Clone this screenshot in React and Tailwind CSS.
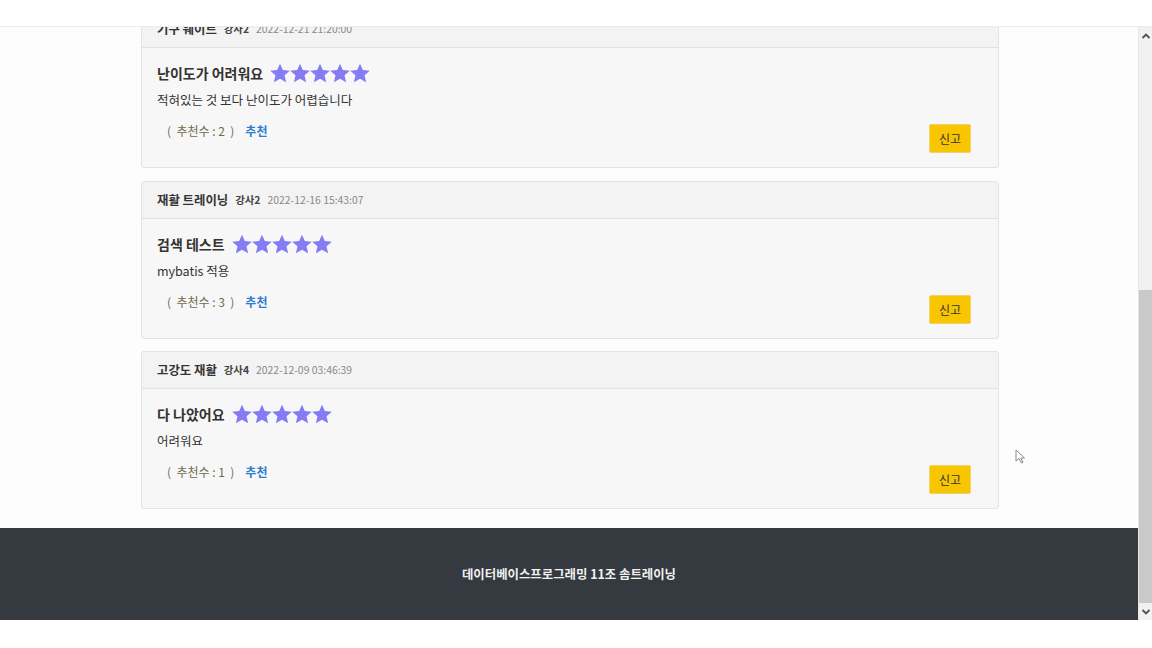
import React from "react";

const font = { fontFamily: '"Noto Sans CJK KR", "Noto Sans", sans-serif' };

function Star() {
  return (
    <svg width="20" height="20" viewBox="1 1.2 22 21.2" className="block">
      <polygon
        points="12,1.5 15.1,8.6 22.8,9.3 17,14.4 18.7,22 12,18 5.3,22 7,14.4 1.2,9.3 8.9,8.6"
        fill="#857bf3"
      />
    </svg>
  );
}

function Card({ course, teacher, date, title, text, count, first }) {
  return (
    <div className={`border border-[#e3e3e3] rounded-[3px] bg-[#f7f7f7] ${first ? "-mt-[17px] mb-[1px]" : ""}`}>
      <div className="h-[37px] border-b border-[#e2e2e2] bg-[#f3f3f3] flex items-center px-[15px] gap-[7px]">
        <span className="text-[12.4px] font-bold text-[#333]">{course}</span>
        <span className="text-[10.4px] font-bold text-[#444]">{teacher}</span>
        <span className="text-[10.4px] text-[#8a8a8a]">{date}</span>
      </div>
      <div className="pl-[15px] pr-[27px] pt-[13px] pb-[14px]">
        <div className="h-[24px] flex items-center gap-[7px]">
          <span className="text-[14px] font-bold text-[#333]">{title}</span>
          <div className="flex">
            <Star />
            <Star />
            <Star />
            <Star />
            <Star />
          </div>
        </div>
        <div className="mt-[6px] h-[18px] leading-[18px] text-[12.5px] text-[#333]">{text}</div>
        <div className="mt-[15px] flex justify-between items-start">
          <div className="-mt-[2px] pl-[10px] leading-[18px] text-[12px] flex gap-[11px]">
            <span className="text-[#6e6c4c] whitespace-pre">{`(  추천수 : ${count}  )`}</span>
            <span className="text-[#2f7cd0] font-semibold">추천</span>
          </div>
          <button className="w-[42px] h-[29px] bg-[#f7c600] border border-[#f0d36a] rounded-[2px] text-[12px] text-[#333] flex items-center justify-center">
            신고
          </button>
        </div>
      </div>
    </div>
  );
}

export default function App() {
  return (
    <div className="w-[1152px] h-[648px] bg-white relative overflow-hidden" style={font}>
      <div className="h-[27px] bg-white border-b border-[#ececec]" />
      <div className="h-[593px] flex">
        <div className="flex-1 flex flex-col bg-[#fdfdfd] overflow-hidden">
          <div className="flex-1 overflow-hidden pl-[141px] pr-[139px]">
            <div className="flex flex-col gap-[12px]">
              <Card
                first
                course="기구 웨이트"
                teacher="강사2"
                date="2022-12-21 21:20:00"
                title="난이도가 어려워요"
                text="적혀있는 것 보다 난이도가 어렵습니다"
                count={2}
              />
              <Card
                course="재활 트레이닝"
                teacher="강사2"
                date="2022-12-16 15:43:07"
                title="검색 테스트"
                text="mybatis 적용"
                count={3}
              />
              <Card
                course="고강도 재활"
                teacher="강사4"
                date="2022-12-09 03:46:39"
                title="다 나았어요"
                text="어려워요"
                count={1}
              />
            </div>
          </div>
          <div className="h-[92px] bg-[#343a40] flex items-center justify-center">
            <span className="text-[12.4px] font-bold text-[#f1f1f1]">데이터베이스프로그래밍 11조 솜트레이닝</span>
          </div>
        </div>
        <div className="w-[14px] bg-[#f1f1f1] flex flex-col border-l border-[#e6e6e6]">
          <div className="h-[18px] flex items-center justify-center">
            <svg width="10" height="8" viewBox="0 0 10 8">
              <polyline points="1.5,6 5,2.5 8.5,6" fill="none" stroke="#505050" strokeWidth="1.8" />
            </svg>
          </div>
          <div className="flex-1 flex flex-col">
            <div className="h-[245px]" />
            <div className="flex-1 bg-[#c9c9c9]" />
          </div>
          <div className="h-[17px] flex items-center justify-center">
            <svg width="10" height="8" viewBox="0 0 10 8">
              <polyline points="1.5,2 5,5.5 8.5,2" fill="none" stroke="#505050" strokeWidth="1.8" />
            </svg>
          </div>
        </div>
      </div>
      <svg className="absolute left-[1015px] top-[449px]" width="12" height="16" viewBox="0 0 12 16">
        <path d="M1 1 L1 12 L4 9.5 L6.5 14 L8 13.3 L5.8 9 L9.5 9 Z" fill="#fff" stroke="#888" strokeWidth="1" />
      </svg>
    </div>
  );
}
